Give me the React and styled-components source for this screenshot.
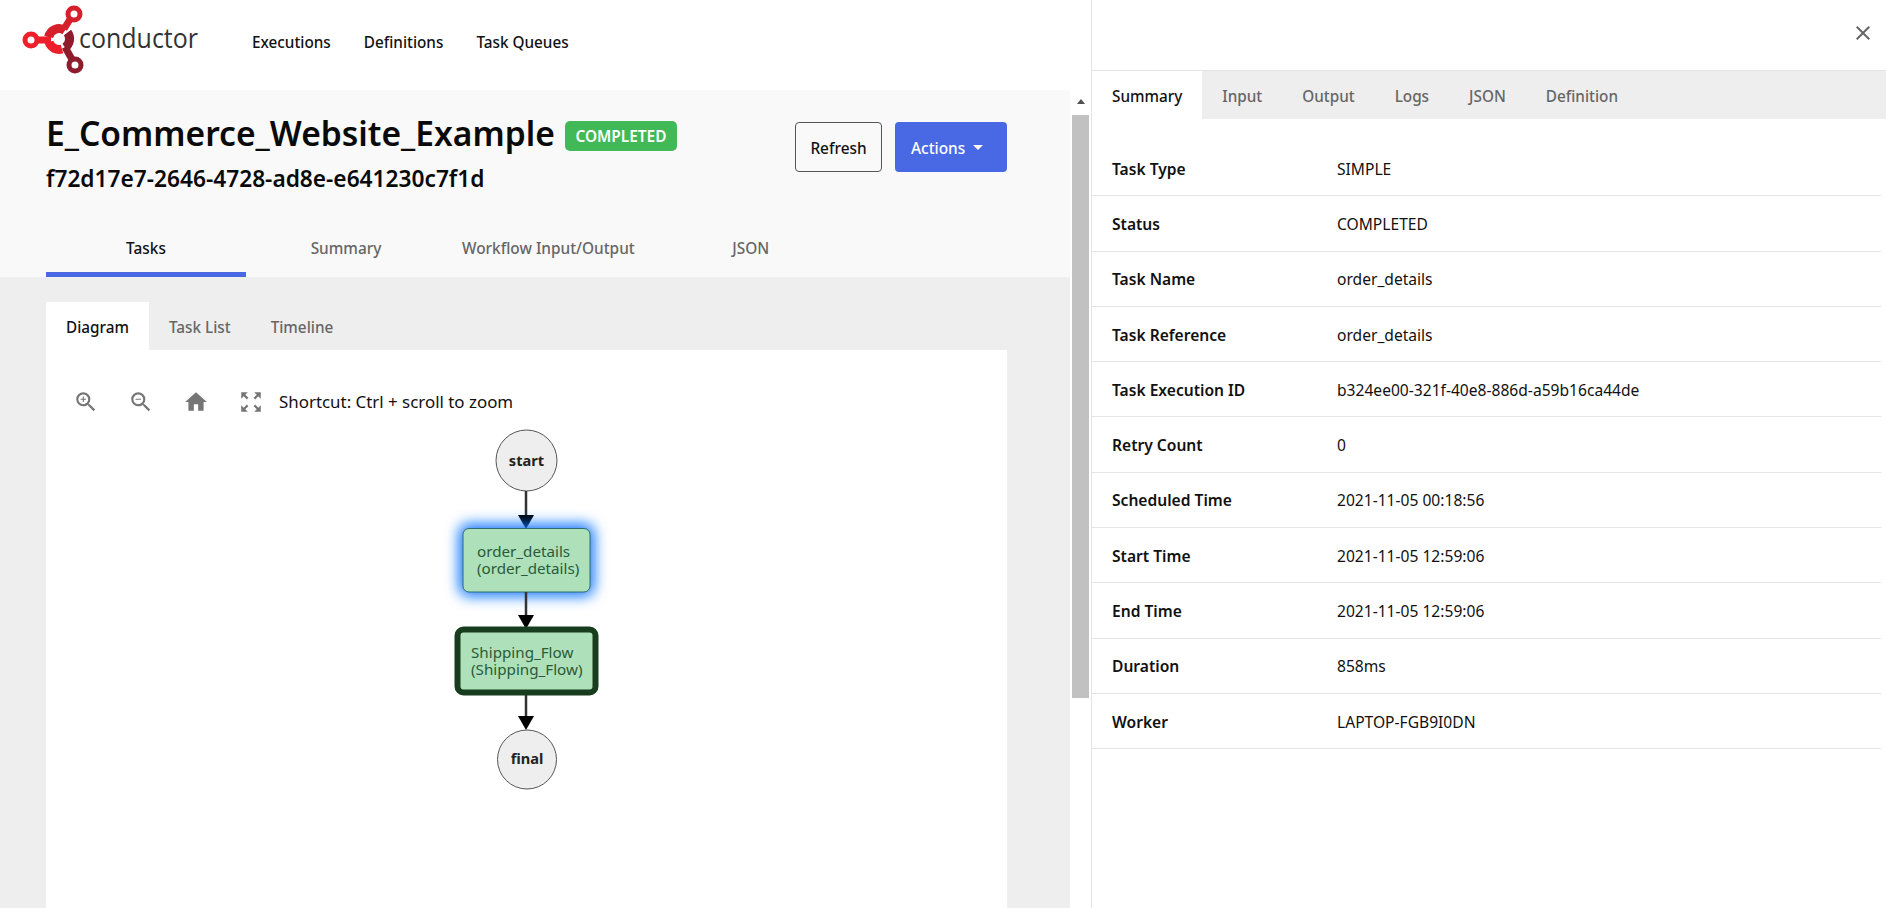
import styled, { createGlobalStyle } from "styled-components";
import { MdClose, MdHome, MdZoomIn, MdZoomOut, MdZoomOutMap } from "react-icons/md";

const taskRows = [
  ["Task Type", "SIMPLE"],
  ["Status", "COMPLETED"],
  ["Task Name", "order_details"],
  ["Task Reference", "order_details"],
  ["Task Execution ID", "b324ee00-321f-40e8-886d-a59b16ca44de"],
  ["Retry Count", "0"],
  ["Scheduled Time", "2021-11-05 00:18:56"],
  ["Start Time", "2021-11-05 12:59:06"],
  ["End Time", "2021-11-05 12:59:06"],
  ["Duration", "858ms"],
  ["Worker", "LAPTOP-FGB9I0DN"],
];

function Logo() {
  return (
    <svg width="212" height="90" viewBox="0 0 212 90">
      <g fill="none">
        <path d="M37 40 H51" stroke="#ee1f2a" strokeWidth="7" />
        <path d="M64 29 L72 16" stroke="#d5202b" strokeWidth="7" />
        <path d="M65 47 L74 63" stroke="#8e1c2c" strokeWidth="7" />
        <path d="M48.7 37 A10.5 10.5 0 0 1 65 30.5" stroke="#d5202b" strokeWidth="9" />
        <path d="M67.5 32.5 A10.5 10.5 0 0 1 65 47.5" stroke="#8e1c2c" strokeWidth="9" />
        <path d="M49 42 A10.5 10.5 0 0 0 62 49" stroke="#ee1f2a" strokeWidth="9" />
        <circle cx="74" cy="14" r="6" stroke="#d5202b" strokeWidth="5" fill="#fff" />
        <circle cx="31" cy="40" r="6" stroke="#ee1f2a" strokeWidth="5" fill="#fff" />
        <circle cx="75" cy="65" r="6" stroke="#8e1c2c" strokeWidth="5" fill="#fff" />
      </g>
      <LogoText x="79" y="48" textLength="119" lengthAdjust="spacingAndGlyphs">
        conductor
      </LogoText>
    </svg>
  );
}

function Diagram() {
  return (
    <DiagramSvg viewBox="46 425 961 483">
      <defs>
        <filter id="glow" x="-40%" y="-70%" width="180%" height="240%">
          <feGaussianBlur stdDeviation="7" />
        </filter>
      </defs>

      <circle cx="526.5" cy="460.5" r="30.5" fill="#eee" stroke="#555" />
      <NodeTitle x="526.5" y="466">start</NodeTitle>

      <Edge x1="526" y1="491" x2="526" y2="518" />
      <polygon points="518,515 534,515 526,529" fill="#000" />

      <rect x="459" y="524" width="135" height="72" rx="9" fill="#0f74ff" filter="url(#glow)" />
      <rect x="463" y="528.5" width="127" height="63.5" rx="6" fill="#aee1b9" stroke="#2d6d73" />
      <NodeLabel x="477" y="557">order_details</NodeLabel>
      <NodeLabel x="477" y="574">(order_details)</NodeLabel>

      <Edge x1="526" y1="592" x2="526" y2="618" />
      <polygon points="518,615 534,615 526,629" fill="#000" />

      <rect x="457.5" y="629.5" width="138" height="63" rx="6" fill="#aee1b9" stroke="#173d1e" strokeWidth="6" />
      <NodeLabel x="471" y="658">Shipping_Flow</NodeLabel>
      <NodeLabel x="471" y="675">(Shipping_Flow)</NodeLabel>

      <Edge x1="526" y1="695" x2="526" y2="720" />
      <polygon points="518,716 534,716 526,730" fill="#000" />

      <circle cx="527" cy="759.5" r="29.5" fill="#eee" stroke="#555" />
      <NodeTitle x="527" y="764">final</NodeTitle>
    </DiagramSvg>
  );
}

export default function App() {
  return (
    <>
      <GlobalStyle />
      <Page>
        <LeftPane>
          <TopBar>
            <Logo />
            <NavLinks>
              <NavLink>Executions</NavLink>
              <NavLink>Definitions</NavLink>
              <NavLink>Task Queues</NavLink>
            </NavLinks>
          </TopBar>
          <ScrollArea>
            <Content>
              <WorkflowHead>
                <TitleRow>
                  <div>
                    <TitleLine>
                      <Title>E_Commerce_Website_Example</Title>
                      <StatusBadge>COMPLETED</StatusBadge>
                    </TitleLine>
                    <WorkflowId>f72d17e7-2646-4728-ad8e-e641230c7f1d</WorkflowId>
                  </div>
                  <Actions>
                    <RefreshButton>Refresh</RefreshButton>
                    <ActionsButton>
                      Actions <Caret />
                    </ActionsButton>
                  </Actions>
                </TitleRow>
                <MainTabs>
                  <MainTab $active>Tasks</MainTab>
                  <MainTab>Summary</MainTab>
                  <MainTab>Workflow Input/Output</MainTab>
                  <MainTab>JSON</MainTab>
                </MainTabs>
              </WorkflowHead>
              <Body>
                <Card>
                  <CardTabs>
                    <CardTab $active>Diagram</CardTab>
                    <CardTab>Task List</CardTab>
                    <CardTab>Timeline</CardTab>
                  </CardTabs>
                  <CardBody>
                    <Toolbar>
                      <ToolButton><MdZoomIn /></ToolButton>
                      <ToolButton><MdZoomOut /></ToolButton>
                      <ToolButton><MdHome /></ToolButton>
                      <ToolButton><MdZoomOutMap /></ToolButton>
                      <Shortcut>Shortcut: Ctrl + scroll to zoom</Shortcut>
                    </Toolbar>
                    <Diagram />
                  </CardBody>
                </Card>
              </Body>
            </Content>
            <ScrollTrack>
              <ScrollArrow />
              <ScrollThumb />
            </ScrollTrack>
          </ScrollArea>
        </LeftPane>
        <RightPane>
          <DrawerTop>
            <CloseButton><MdClose /></CloseButton>
          </DrawerTop>
          <DrawerTabs>
            <CardTab $active>Summary</CardTab>
            <CardTab>Input</CardTab>
            <CardTab>Output</CardTab>
            <CardTab>Logs</CardTab>
            <CardTab>JSON</CardTab>
            <CardTab>Definition</CardTab>
          </DrawerTabs>
          <Rows>
            {taskRows.map(([label, value]) => (
              <Row key={label}>
                <RowLabel>{label}</RowLabel>
                <span>{value}</span>
              </Row>
            ))}
          </Rows>
        </RightPane>
      </Page>
    </>
  );
}

const GlobalStyle = createGlobalStyle`
  html, body {
    margin: 0;
    height: 100%;
    overflow: hidden;
    background: #fff;
  }
  body {
    font-family: "Noto Sans", "Open Sans", sans-serif;
    color: #111;
  }
  * {
    box-sizing: border-box;
  }
`;

const Page = styled.div`
  display: flex;
  height: 908px;
  overflow: hidden;
`;

const LeftPane = styled.div`
  width: 1092px;
  flex: none;
  display: flex;
  flex-direction: column;
  border-right: 1px solid #e4e4e4;
`;

const TopBar = styled.header`
  height: 90px;
  flex: none;
  display: flex;
  align-items: flex-start;
`;

const LogoText = styled.text`
  font-family: "Open Sans", sans-serif;
  font-size: 27px;
  font-weight: 400;
  fill: #333;
`;

const NavLinks = styled.nav`
  display: flex;
  gap: 33px;
  margin: 32px 0 0 40px;
`;

const NavLink = styled.a`
  font-size: 15.3px;
  font-weight: 500;
  line-height: 20px;
  color: #111;
`;

const ScrollArea = styled.div`
  flex: 1;
  min-height: 0;
  display: flex;
`;

const Content = styled.main`
  width: 1070px;
  flex: none;
  display: flex;
  flex-direction: column;
`;

const WorkflowHead = styled.section`
  height: 187px;
  flex: none;
  background: #f9f9f9;
  padding: 0 63px 0 46px;
  display: flex;
  flex-direction: column;
  justify-content: space-between;
`;

const TitleRow = styled.div`
  display: flex;
  justify-content: space-between;
  align-items: flex-start;
`;

const TitleLine = styled.div`
  display: flex;
  align-items: center;
  gap: 10px;
  margin-top: 20px;
`;

const Title = styled.h1`
  margin: 0;
  font-size: 33.6px;
  font-weight: 600;
  line-height: 46px;
  color: #0a0a0a;
`;

const StatusBadge = styled.span`
  background: #41b957;
  color: #fff;
  border-radius: 5px;
  height: 30px;
  width: 112px;
  display: flex;
  align-items: center;
  justify-content: center;
  font-size: 15.4px;
  font-weight: 600;
  margin-top: 6px;
`;

const WorkflowId = styled.div`
  margin-top: 8px;
  font-size: 22.7px;
  font-weight: 600;
  line-height: 30px;
  color: #0a0a0a;
`;

const Actions = styled.div`
  display: flex;
  gap: 13px;
  margin-top: 32px;
`;

const RefreshButton = styled.button`
  height: 50px;
  width: 87px;
  border: 1px solid #555;
  border-radius: 4px;
  background: transparent;
  font: inherit;
  font-size: 15.4px;
  font-weight: 500;
  color: #111;
  padding: 2px 0 0;
`;

const ActionsButton = styled.button`
  height: 50px;
  width: 112px;
  border: none;
  border-radius: 4px;
  background: #4969e4;
  color: #fff;
  font: inherit;
  font-size: 15.4px;
  font-weight: 500;
  text-align: left;
  padding: 2px 0 0 16px;
`;

const Caret = styled.span`
  display: inline-block;
  margin-left: 4px;
  vertical-align: 4px;
  border-left: 5.5px solid transparent;
  border-right: 5.5px solid transparent;
  border-top: 5.5px solid #fff;
`;

const MainTabs = styled.div`
  display: flex;
`;

const MainTab = styled.div`
  min-width: 200px;
  height: 77px;
  padding: 25px 16px 0;
  text-align: center;
  font-size: 15.4px;
  font-weight: 500;
  line-height: 47px;
  color: ${(p) => (p.$active ? "#111" : "#666")};
  border-bottom: 5px solid ${(p) => (p.$active ? "#4969e4" : "transparent")};
`;

const Body = styled.div`
  flex: 1;
  min-height: 0;
  background: #eee;
  padding: 25px 63px 0 46px;
  display: flex;
`;

const Card = styled.div`
  flex: 1;
  display: flex;
  flex-direction: column;
`;

const CardTabs = styled.div`
  display: flex;
  height: 48px;
  flex: none;
`;

const CardTab = styled.div`
  height: 48px;
  padding: 1px 20px 0;
  display: flex;
  align-items: center;
  font-size: 15.3px;
  font-weight: 500;
  background: ${(p) => (p.$active ? "#fff" : "transparent")};
  color: ${(p) => (p.$active ? "#111" : "#666")};
`;

const CardBody = styled.div`
  flex: 1;
  background: #fff;
  min-height: 0;
  overflow: hidden;
`;

const Toolbar = styled.div`
  height: 75px;
  padding: 30px 0 0 12px;
  display: flex;
  align-items: flex-start;
`;

const ToolButton = styled.span`
  width: 55px;
  height: 45px;
  flex: none;
  display: flex;
  align-items: flex-start;
  padding-top: 9px;
  justify-content: center;
  color: #757575;
  font-size: 26px;
`;

const Shortcut = styled.span`
  margin-left: 1px;
  font-size: 16.9px;
  line-height: 44px;
  color: #111;
`;

const DiagramSvg = styled.svg`
  display: block;
  width: 961px;
  height: 483px;
`;

const NodeTitle = styled.text`
  font-size: 14.6px;
  font-weight: 700;
  text-anchor: middle;
  fill: #222;
`;

const NodeLabel = styled.text`
  font-size: 15.2px;
  fill: #2a5a3a;
`;

const Edge = styled.line`
  stroke: #333;
  stroke-width: 2.5;
`;

const ScrollTrack = styled.div`
  width: 17px;
  margin-left: 2px;
  display: flex;
  flex-direction: column;
  align-items: center;
`;

const ScrollArrow = styled.div`
  margin-top: 9px;
  border-left: 4px solid transparent;
  border-right: 4px solid transparent;
  border-bottom: 5px solid #505050;
`;

const ScrollThumb = styled.div`
  width: 100%;
  height: 583px;
  margin-top: 11px;
  background: #c1c1c1;
`;

const RightPane = styled.aside`
  flex: 1;
  min-width: 0;
  display: flex;
  flex-direction: column;
`;

const DrawerTop = styled.div`
  height: 71px;
  flex: none;
  display: flex;
  justify-content: flex-end;
  border-bottom: 1px solid #e4e4e4;
`;

const CloseButton = styled.span`
  color: #666;
  font-size: 24px;
  margin: 19px 11px 0 0;
  height: 24px;
`;

const DrawerTabs = styled.div`
  display: flex;
  height: 48px;
  flex: none;
  background: #eee;
`;

const Rows = styled.div`
  padding: 22px 5px 0 0;
`;

const Row = styled.div`
  height: 55.3px;
  display: grid;
  grid-template-columns: 225px 1fr;
  align-items: center;
  padding: 1px 0 0 20px;
  border-bottom: 1px solid #e4e4e4;
  font-size: 15.6px;
  color: #111;
`;

const RowLabel = styled.span`
  font-weight: 600;
`;
